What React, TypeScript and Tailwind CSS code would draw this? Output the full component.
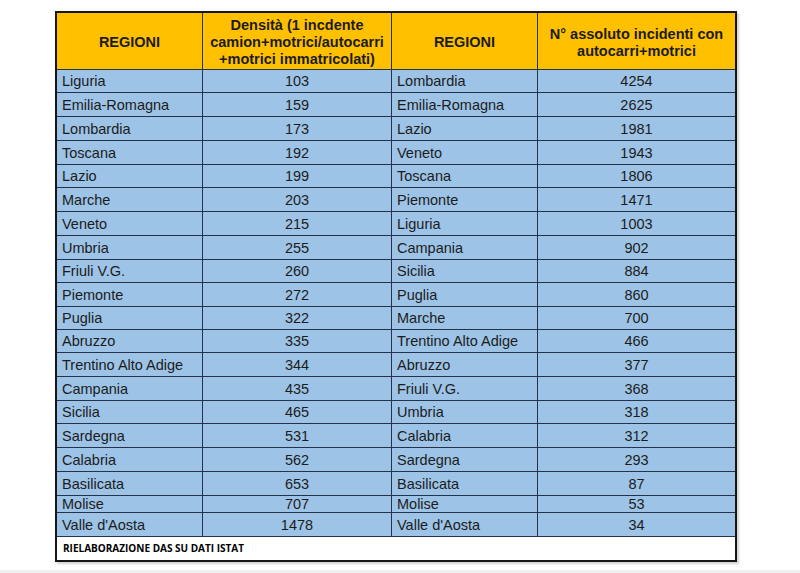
const rows: [string, string, string, string, number][] = [
  ["Liguria", "103", "Lombardia", "4254", 23],
  ["Emilia-Romagna", "159", "Emilia-Romagna", "2625", 24],
  ["Lombardia", "173", "Lazio", "1981", 24],
  ["Toscana", "192", "Veneto", "1943", 24],
  ["Lazio", "199", "Toscana", "1806", 23],
  ["Marche", "203", "Piemonte", "1471", 24],
  ["Veneto", "215", "Liguria", "1003", 24],
  ["Umbria", "255", "Campania", "902", 24],
  ["Friuli V.G.", "260", "Sicilia", "884", 23],
  ["Piemonte", "272", "Puglia", "860", 24],
  ["Puglia", "322", "Marche", "700", 23],
  ["Abruzzo", "335", "Trentino Alto Adige", "466", 23],
  ["Trentino Alto Adige", "344", "Abruzzo", "377", 24],
  ["Campania", "435", "Friuli V.G.", "368", 24],
  ["Sicilia", "465", "Umbria", "318", 23],
  ["Sardegna", "531", "Calabria", "312", 24],
  ["Calabria", "562", "Sardegna", "293", 24],
  ["Basilicata", "653", "Basilicata", "87", 24],
  ["Molise", "707", "Molise", "53", 17],
  ["Valle d'Aosta", "1478", "Valle d'Aosta", "34", 24],
]

const line = "border-[#24324a]"

function HeadCell({ w, last, children }: { w: string; last?: boolean; children: React.ReactNode }) {
  return (
    <div className={`${w} h-full flex items-center justify-center pt-[3px] text-center font-bold leading-[17px] border-b ${line} ${last ? "" : "border-r"}`}>
      {children}
    </div>
  )
}

export default function App() {
  return (
    <div className="w-[800px] h-[573px] bg-white flex flex-col text-[#1c1c1c]" style={{ fontFamily: '"Liberation Sans", Arial, sans-serif' }}>
      <div className="flex-1 pt-[11px] pl-[55px]">
        <div className="w-[682px] border-2 border-[#161616] shadow-[2px_2px_2px_rgba(0,0,0,0.18)] text-[14.5px]">
          <div className="flex h-[57px] bg-[#ffc000]">
            <HeadCell w="w-[146px]">REGIONI</HeadCell>
            <HeadCell w="w-[189px]">
              <span>Densità (1 incdente<br />camion+motrici/autocarri<br />+motrici immatricolati)</span>
            </HeadCell>
            <HeadCell w="w-[146px]">REGIONI</HeadCell>
            <HeadCell w="w-[197px]" last>
              <span>N° assoluto incidenti con<br />autocarri+motrici</span>
            </HeadCell>
          </div>
          {rows.map(([r1, v1, r2, v2, h]) => (
            <div key={r1} className="flex bg-[#9dc3e6]" style={{ height: h }}>
              <div className={`w-[146px] flex items-center pt-[2px] pl-[5px] border-r border-b ${line}`}>{r1}</div>
              <div className={`w-[189px] flex items-center justify-center pt-[2px] border-r border-b ${line}`}>{v1}</div>
              <div className={`w-[146px] flex items-center pt-[2px] pl-[5px] border-r border-b ${line}`}>{r2}</div>
              <div className={`w-[197px] flex items-center justify-center pt-[2px] border-b ${line}`}>{v2}</div>
            </div>
          ))}
          <div className="h-[23px] flex items-center pl-[6px] bg-white">
            <span className="text-[10px] font-bold text-black" style={{ fontFamily: '"Open Sans", sans-serif' }}>
              RIELABORAZIONE DAS SU DATI ISTAT
            </span>
          </div>
        </div>
      </div>
      <div className="h-[3px] bg-[#f0f0f0]" />
    </div>
  )
}
